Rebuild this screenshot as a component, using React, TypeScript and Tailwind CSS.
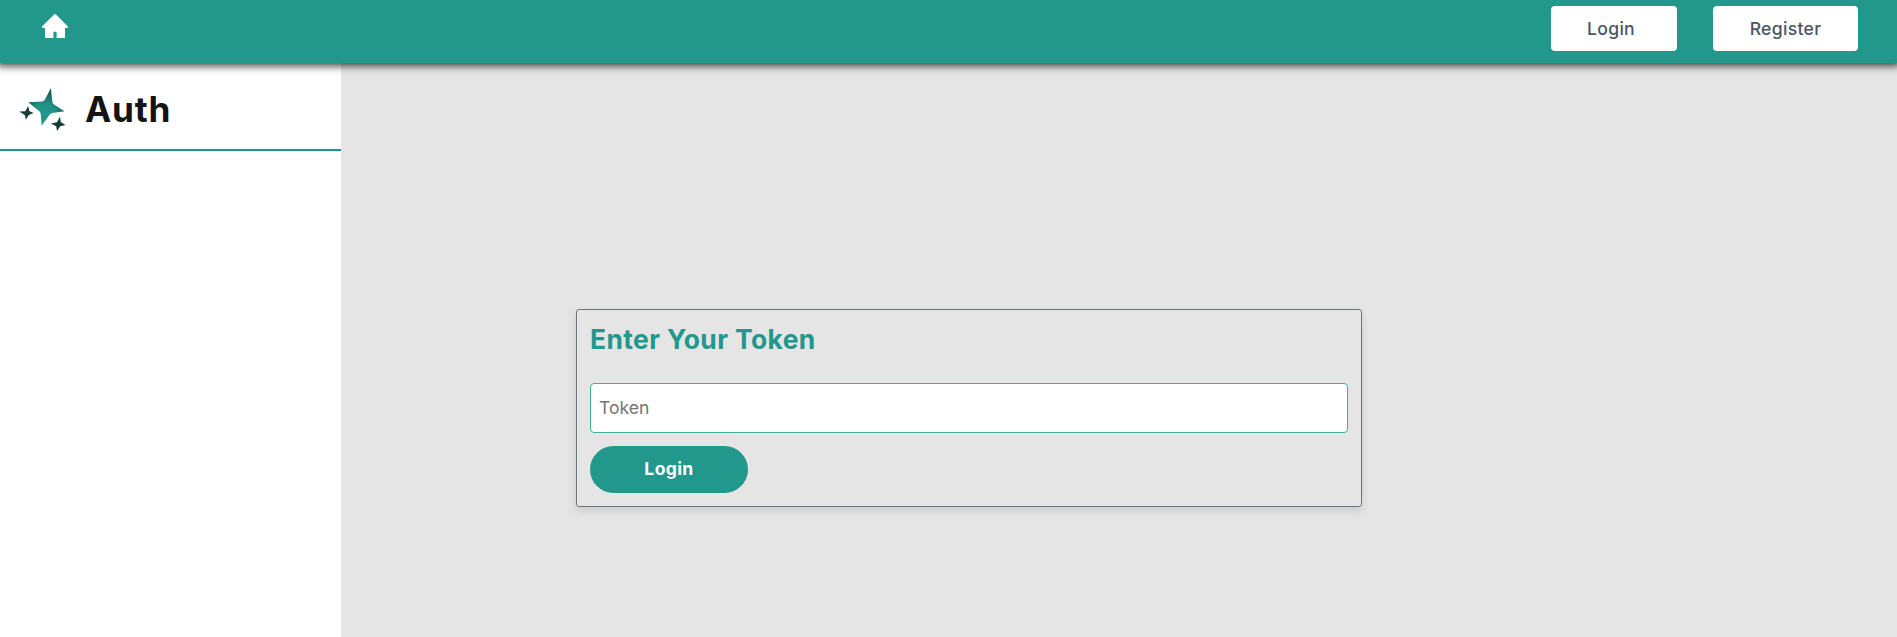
import React from "react";

function HomeIcon() {
  return (
    <svg className="h-[26px] w-[27px]" viewBox="0 0 27 26" fill="#fff" aria-hidden="true">
      <path d="M12 .5a1.4 1.4 0 0 1 2 0L25.700 12.200a1 1 0 0 1-.7 1.700H23v9.500a.6.6 0 0 1-.6.6H14.600v-6.200h-3.200v6.200H3.600a.6.6 0 0 1-.6-.6v-9.500H1a1 1 0 0 1-.7-1.700Z" />
    </svg>
  );
}

function StarsLogo() {
  return (
    <svg className="mt-[3px] h-[50px] w-[50px] shrink-0" viewBox="0 0 50 50" aria-hidden="true">
      <defs>
        <radialGradient id="big" gradientUnits="userSpaceOnUse" cx="28" cy="30" r="22">
          <stop offset="0" stopColor="#23988b" />
          <stop offset="0.4" stopColor="#219488" />
          <stop offset="1" stopColor="#1b5a52" />
        </radialGradient>
      </defs>
      <path fill="url(#big)" d="M33.900 5 35.400 19Q35.600 20.600 37 21.500L47.500 28.300 35.500 30Q33.600 30.300 32.400 32L24.700 42.500 23.700 31Q23.500 29 22 28L11.200 19.200 25.200 18.400Q27.200 18.200 28.100 16.200Z" />
      <path fill="#173d35" d="M11.200 23 12.300 28 16.500 30 11.800 32 8.800 36.800 8 32.200 2.300 28.500 8.200 28.200Z" />
      <path fill="#123d30" d="M43 33.500 43.700 39 48.500 42 43.200 43.300 40 48 39.200 43.200 34 40.500 40 39.300Z" />
    </svg>
  );
}

export default function App() {
  return (
    <div className="flex h-[637px] w-full flex-col overflow-hidden bg-[#e5e5e5] font-['Inter','Liberation_Sans',sans-serif]">
      <header className="relative z-10 flex h-[63px] shrink-0 items-start justify-between bg-[#22978b] pr-[39px] pl-[42px] shadow-[0_0_8px_3px_rgba(0,0,0,0.75)]">
        <a href="#" aria-label="Home" className="pt-[14px]">
          <HomeIcon />
        </a>
        <nav className="flex gap-9 pt-1.5 text-[17.6px] font-medium tracking-[0.3px] text-[#4b5563]">
          <button className="h-[45px] w-[126px] rounded-[4px] bg-white pt-px pr-[6px]">Login</button>
          <button className="h-[45px] w-[145px] rounded-[4px] bg-white pt-px">Register</button>
        </nav>
      </header>
      <div className="flex min-h-0 flex-1">
        <aside className="w-[341px] shrink-0 bg-white">
          <div className="flex h-[88px] items-center border-b-2 border-[#22978b] pl-[17px]">
            <StarsLogo />
            <h1 className="pt-[7px] pl-[18px] text-[35.2px] leading-none font-bold tracking-[0.8px] text-[#141414]">Auth</h1>
          </div>
        </aside>
        <main className="flex-1 pt-[246px] pl-[235px]">
          <form className="h-[198px] w-[786px] rounded-[3px] border border-[#6b7280] px-[13px] pt-[11px] shadow-[0_4px_8px_rgba(0,0,0,0.12)]">
            <h2 className="h-[38px] text-[26.4px] leading-[37px] font-bold tracking-[0.4px] text-[#22978b]">Enter Your Token</h2>
            <input
              type="text"
              placeholder="Token"
              className="mt-[24px] block h-[50px] w-[758px] rounded-[4px] border border-[#45ab9f] bg-white px-2 pb-[2px] text-[17.6px] outline-none placeholder:text-[#757575]"
            />
            <button type="button" className="mt-[13px] block h-[47px] w-[158px] rounded-full bg-[#22978b] text-[17.6px] font-bold tracking-[0.35px] text-white">
              Login
            </button>
          </form>
        </main>
      </div>
    </div>
  );
}
